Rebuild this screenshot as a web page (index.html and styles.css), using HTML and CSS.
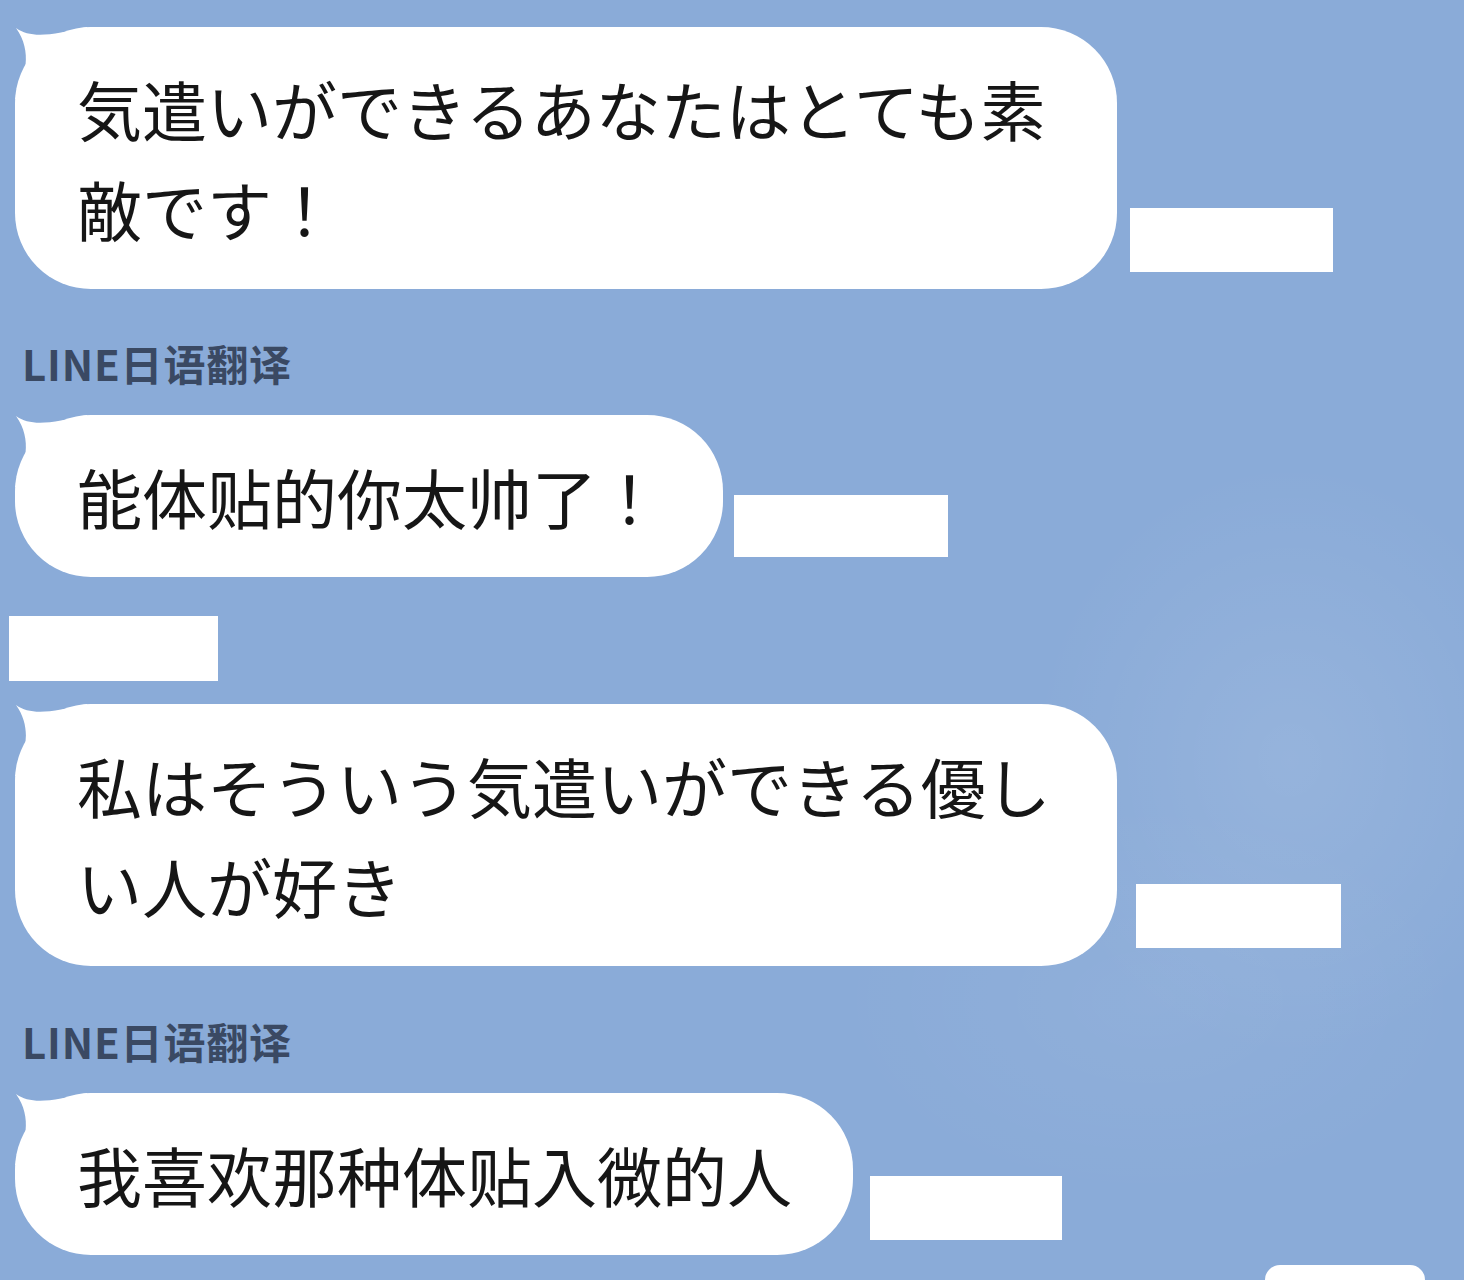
FILE: index.html
```html
<!DOCTYPE html>
<html lang="ja">
<head>
<meta charset="utf-8">
<title>LINE</title>
<link rel="stylesheet" href="styles.css">
</head>
<body>
<main class="chat">
  <div class="row">
    <div class="bubble ja">
      <svg class="tail" width="80" height="80" viewBox="0 0 80 80"><path d="M1 1 C 16 12 38 8 72 0 L 72 72 L 0 72 C 10 50 18 25 1 1 Z" fill="#fff"/></svg>
      <span class="msg">気遣いができるあなたはとても素敵です！</span>
    </div>
    <div class="redact redact-a"></div>
  </div>

  <div class="name">LINE日语翻译</div>

  <div class="row">
    <div class="bubble zh">
      <svg class="tail" width="80" height="80" viewBox="0 0 80 80"><path d="M1 1 C 16 12 38 8 72 0 L 72 72 L 0 72 C 10 50 18 25 1 1 Z" fill="#fff"/></svg>
      <span class="msg">能体贴的你太帅了！</span>
    </div>
    <div class="redact redact-b"></div>
  </div>

  <div class="redact redact-name"></div>

  <div class="row">
    <div class="bubble ja">
      <svg class="tail" width="80" height="80" viewBox="0 0 80 80"><path d="M1 1 C 16 12 38 8 72 0 L 72 72 L 0 72 C 10 50 18 25 1 1 Z" fill="#fff"/></svg>
      <span class="msg">私はそういう気遣いができる優しい人が好き</span>
    </div>
    <div class="redact redact-c"></div>
  </div>

  <div class="name name-second">LINE日语翻译</div>

  <div class="row">
    <div class="bubble zh">
      <svg class="tail" width="80" height="80" viewBox="0 0 80 80"><path d="M1 1 C 16 12 38 8 72 0 L 72 72 L 0 72 C 10 50 18 25 1 1 Z" fill="#fff"/></svg>
      <span class="msg">我喜欢那种体贴入微的人</span>
    </div>
    <div class="redact redact-d"></div>
  </div>

  <div class="row row-out">
    <div class="out-bubble"></div>
  </div>
</main>
</body>
</html>
```

FILE: styles.css
```css
html, body {
  margin: 0;
  padding: 0;
  height: 1280px;
  overflow: hidden;
}

body {
  background-color: #8aabd8;
  background-image:
    radial-gradient(ellipse 260px 300px at 1290px 760px, rgba(255,255,255,0.10), rgba(255,255,255,0) 100%),
    radial-gradient(ellipse 320px 200px at 1150px 1000px, rgba(255,255,255,0.05), rgba(255,255,255,0) 100%);
  font-family: "Noto Sans CJK JP", "Noto Sans", sans-serif;
}

.chat {
  display: flex;
  flex-direction: column;
  align-items: flex-start;
  padding: 27px 0 0 15px;
}

.row {
  display: flex;
  align-items: flex-end;
}

.bubble {
  position: relative;
  box-sizing: border-box;
  max-width: 1102px;
  padding: 31px 61px 31px 62px;
  background: #ffffff;
  border-radius: 76px;
  color: #161616;
  font-size: 65px;
  line-height: 100px;
  word-break: break-all;
}

.bubble.ja {
  font-family: "Noto Sans CJK JP", sans-serif;
}

.bubble.zh {
  font-family: "Noto Sans CJK SC", sans-serif;
}

.msg {
  position: relative;
}

.tail {
  position: absolute;
  left: 0;
  top: 0;
  display: block;
}

.redact {
  background: #ffffff;
}

.redact-a {
  width: 203px;
  height: 64px;
  margin: 0 0 17px 13px;
}

.redact-b {
  width: 214px;
  height: 62px;
  margin: 0 0 20px 11px;
}

.redact-c {
  width: 205px;
  height: 64px;
  margin: 0 0 18px 19px;
}

.redact-d {
  width: 192px;
  height: 64px;
  margin: 0 0 15px 17px;
}

.redact-name {
  width: 209px;
  height: 65px;
  margin: 39px 0 23px -6px;
}

.name {
  margin: 46px 0 24px 7px;
  font-family: "Noto Sans CJK SC", "Noto Sans", sans-serif;
  font-weight: 700;
  font-size: 42px;
  line-height: 56px;
  color: #3a4963;
  letter-spacing: 0.8px;
}

.name-second {
  margin-top: 47px;
}

.row-out {
  align-self: stretch;
  justify-content: flex-end;
  margin-top: 10px;
}

.out-bubble {
  width: 160px;
  height: 15px;
  margin-right: 39px;
  background: #ffffff;
  border-radius: 28px 28px 0 0;
}
```
